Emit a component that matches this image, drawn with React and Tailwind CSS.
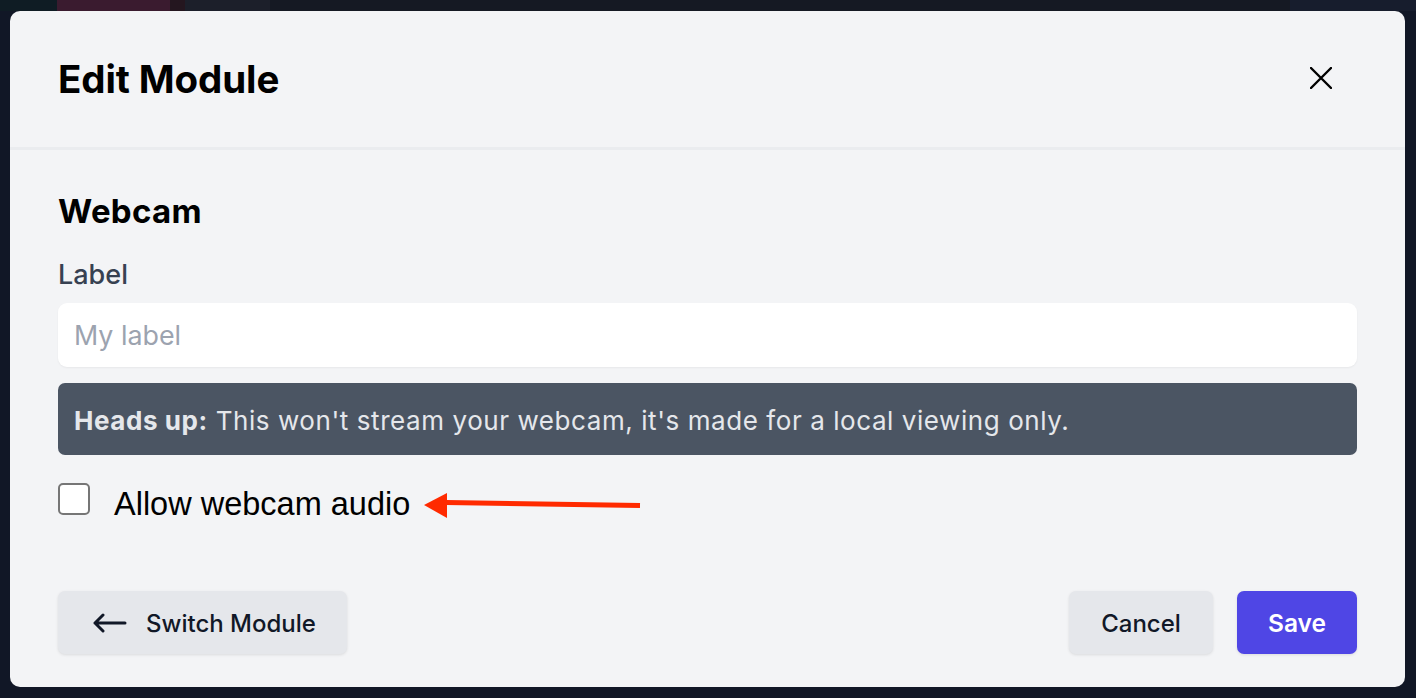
import React from "react";

export default function App() {
  return (
    <div
      className="w-[1416px] h-[698px] overflow-hidden bg-[#111726] flex flex-col"
      style={{ fontFamily: "Inter, 'Noto Sans', sans-serif" }}
    >
      {/* background strip above the modal */}
      <div className="h-[11px] flex shrink-0">
        <div className="w-[57px] bg-[#0f1c24]" />
        <div className="w-[113px] bg-[#3a1b2f]" />
        <div className="w-[15px] bg-[#24161f]" />
        <div className="w-[85px] bg-[#1c1f2a]" />
        <div className="flex-1 bg-[#151923]" />
        <div className="w-[126px] bg-[#171d2d]" />
      </div>

      <div className="flex px-[10px] pr-[11px]">
        <div className="w-[1395px] h-[676px] bg-[#f3f4f6] rounded-[10px] flex flex-col overflow-hidden">
          {/* header */}
          <div className="h-[139px] shrink-0 flex items-center justify-between pl-[48px] pr-[73px] border-b-[3px] border-[#eaecef]">
            <h1 className="text-[38.5px] leading-[48px] font-bold text-black tracking-[-0.1px]">
              Edit Module
            </h1>
            <svg width="22" height="22" viewBox="0 0 22 22" className="mt-[-2px]">
              <path d="M1 1L21 21M21 1L1 21" stroke="#000" strokeWidth="2.4" strokeLinecap="round" />
            </svg>
          </div>

          {/* body */}
          <div className="flex flex-col px-[48px] pt-[41px]">
            <h2 className="text-[33px] leading-[40px] font-bold text-black tracking-[0.3px]">Webcam</h2>
            <label className="mt-[26px] text-[27px] leading-[36px] font-medium text-[#374151]">Label</label>
            <input
              placeholder="My label"
              className="mt-[10px] h-[64px] w-full rounded-[9px] bg-white px-[16px] text-[26.8px] text-[#111827] placeholder:text-[#9ca3af] shadow-[0_1px_2px_rgba(0,0,0,0.05)] outline-none"
            />
            <div className="mt-[16px] h-[72px] rounded-[7px] bg-[#4b5563] px-[16px] flex items-center text-[26px] tracking-[0.57px] text-[#e5e7eb]">
              <span className="mt-[2px]">
                <span className="font-bold">Heads up:</span> This won't stream your webcam, it's made for a local viewing only.
              </span>
            </div>
            <div className="mt-[28px] flex items-center h-[32px]">
              <div className="w-[32px] h-[32px] rounded-[5px] border-2 border-[#767676] bg-white shrink-0" />
              <span
                className="ml-[24px] mt-[9px] text-[32.5px] leading-[40px] text-black"
                style={{ fontFamily: "'Liberation Sans', Arial, sans-serif" }}
              >
                Allow webcam audio
              </span>
              <svg width="220" height="30" viewBox="0 0 220 30" className="ml-[13px] mt-[16px]">
                <path d="M23 10.5L217 13.5" stroke="#ff2a00" strokeWidth="5" />
                <polygon points="1,13 24,1 24,26" fill="#ff2a00" />
              </svg>
            </div>

            <div className="mt-[76px] flex items-center justify-between">
              <button className="h-[63px] w-[289px] rounded-[7px] bg-[#e5e7eb] shadow-[0_1px_3px_rgba(0,0,0,0.1)] flex items-center pl-[35px] text-[24px] font-[550] text-[#111827]">
                <svg width="34" height="20" viewBox="0 0 34 20" className="shrink-0">
                  <path d="M32 10H2M2 10L10 2M2 10L10 18" stroke="#111827" strokeWidth="3" fill="none" strokeLinecap="round" strokeLinejoin="round" />
                </svg>
                <span className="ml-[19px] mt-[2px]">Switch Module</span>
              </button>
              <div className="flex items-center gap-[24px]">
                <button className="h-[63px] w-[144px] rounded-[7px] bg-[#e5e7eb] shadow-[0_1px_3px_rgba(0,0,0,0.1)] text-[24px] font-[550] text-[#111827]">
                  <span className="inline-block mt-[2px]">Cancel</span>
                </button>
                <button className="h-[63px] w-[120px] rounded-[7px] bg-[#4f46e5] shadow-[0_1px_3px_rgba(0,0,0,0.1)] text-[24.5px] font-semibold text-white">
                  <span className="inline-block mt-[2px]">Save</span>
                </button>
              </div>
            </div>
          </div>
        </div>
      </div>
    </div>
  );
}
